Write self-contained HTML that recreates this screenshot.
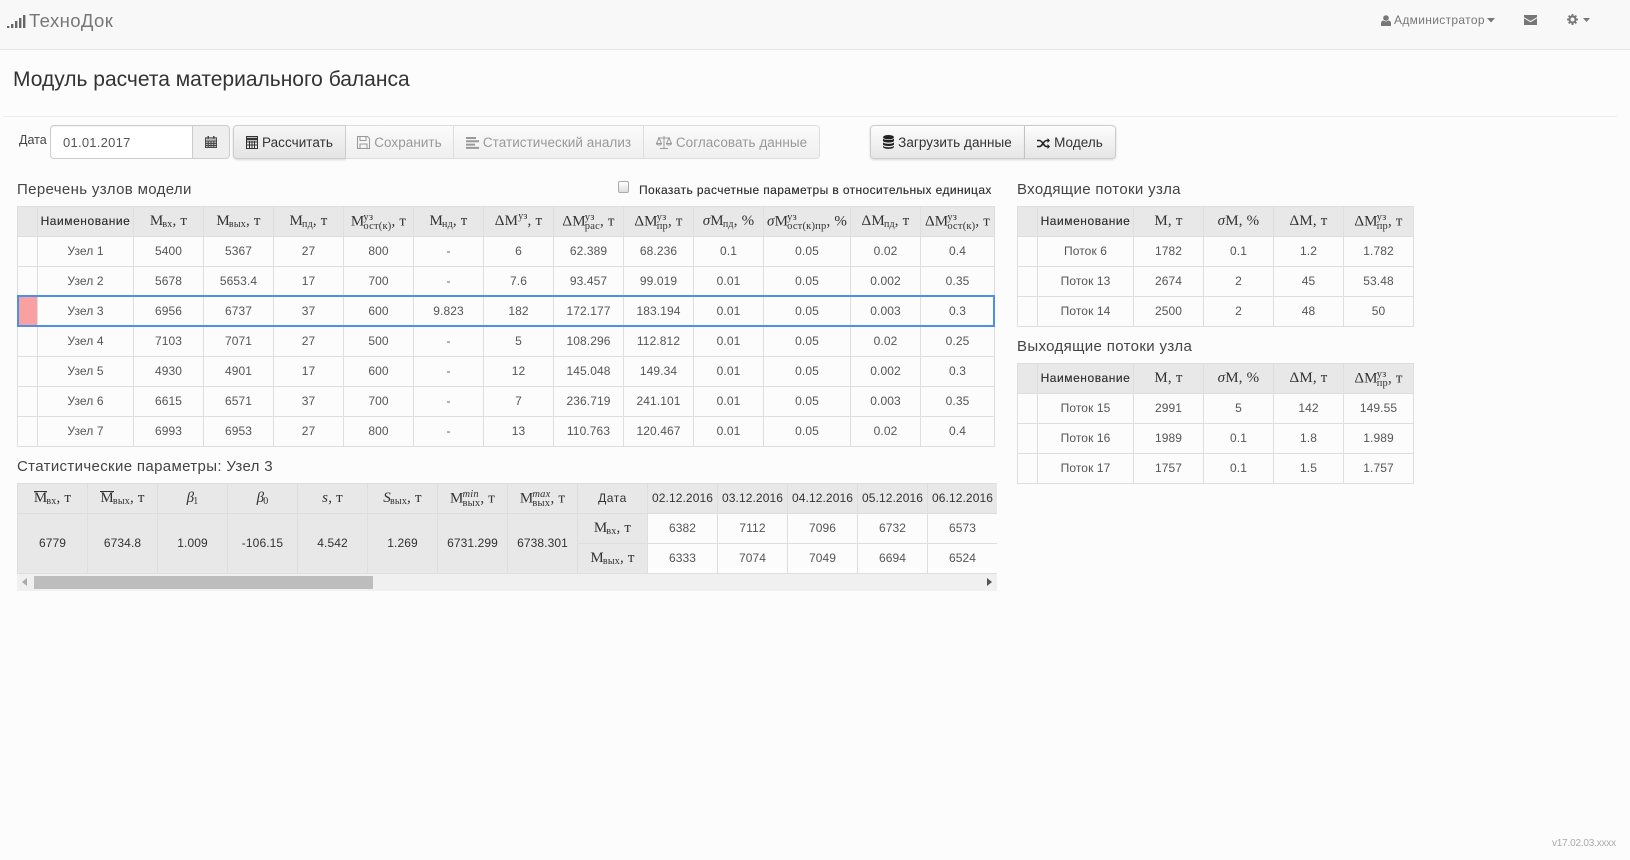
<!DOCTYPE html>
<html lang="ru"><head><meta charset="utf-8"><title>ТехноДок</title>
<style>
*{box-sizing:border-box}
html,body{margin:0;padding:0;width:1630px;height:860px;overflow:hidden;background:#fcfcfc;font-family:"Liberation Sans",sans-serif;color:#555;font-size:12px}
.a{position:absolute;white-space:nowrap}
.nav{left:0;top:0;width:1630px;height:50px;background:#f8f8f8;border-bottom:1px solid #e7e7e7}
.hr{left:3px;top:116px;width:1614px;height:1px;background:#eee}
h1{margin:0;font-weight:400;font-size:21px;color:#333;left:13px;top:68px;line-height:24px;letter-spacing:0}
.t{font-size:15px;color:#444;line-height:18px;letter-spacing:.35px}
.btn{top:125px;height:34px;border:1px solid #ccc;background:linear-gradient(#fdfdfd,#e6e6e6);font-size:13.5px;line-height:34px;color:#333;text-align:center;letter-spacing:.05px;border-left:0}
.btn svg{vertical-align:-2px;margin-right:4px}
.dis{color:#999;background:linear-gradient(#fbfbfb,#efefef);border-color:#ddd}
.dis svg{fill:#999}
table{position:absolute;border-collapse:separate;border-spacing:0;table-layout:fixed;border-top:1px solid #dedede;border-left:1px solid #dedede;background:#fcfcfc}
td,th{height:30px;padding:0 0 2px;border-right:1px solid #dedede;border-bottom:1px solid #dedede;text-align:center;font-weight:400;font-size:12px;color:#555;white-space:nowrap;overflow:hidden;letter-spacing:.1px}
th{background:#e8e8e8;color:#333}
.n{letter-spacing:.55px;text-shadow:0 0 .3px #333}
.g{background:#e8e8e8;color:#333}
th.m{font-family:"Liberation Serif",serif;font-size:15px;color:#333;letter-spacing:.2px;padding:0}
.m sub{font-size:10px;vertical-align:-2px;line-height:0;margin-left:-1px}
.m b{font-weight:400;font-style:italic}
.s{display:inline-block;vertical-align:middle;font-size:10.5px;line-height:9px;text-align:left;margin-left:-1px}
.s i{display:block;font-style:normal}
.s i.it{font-style:italic}
.o{border-top:1px solid #333;line-height:13px;display:inline-block}
</style></head><body>
<div class="a nav"></div>
<svg class="a" style="left:7px;top:15px" width="19" height="13" fill="#666"><rect x="0" y="11" width="2.4" height="2"/><rect x="4" y="9" width="2.4" height="4"/><rect x="8" y="6" width="2.4" height="7"/><rect x="12" y="3" width="2.4" height="10"/><rect x="16" y="0" width="2.4" height="13"/></svg>
<div class="a" style="left:29px;top:10px;font-size:18.5px;line-height:22px;color:#777;letter-spacing:.4px">ТехноДок</div>
<svg class="a" style="left:1381px;top:15px" width="10" height="11" viewBox="0 0 10 11" fill="#777"><circle cx="5" cy="3" r="2.8"/><path d="M0 11V8.2C0 6.6 1.2 5.6 2.6 5.5 3.3 6.1 4.1 6.4 5 6.4s1.7-.3 2.4-.9C8.800 5.600 10 6.600 10 8.200V11z"/></svg>
<div class="a" style="left:1394px;top:12px;font-size:12px;line-height:16px;color:#777;letter-spacing:.33px">Администратор</div>
<svg class="a" style="left:1487px;top:18px" width="8" height="5" fill="#777"><path d="M0 0h8L4 4.500z"/></svg>
<svg class="a" style="left:1524px;top:15px" width="13" height="10" viewBox="0 0 13 10" fill="#777"><path d="M0 0h13v2.200L6.500 6 0 2.200z"/><path d="M0 3.400V10h13V3.400L6.500 7.200z"/></svg>
<svg class="a" style="left:1567px;top:14px" width="11" height="11" viewBox="0 0 12 12"><circle cx="6" cy="6" r="3.300" fill="none" stroke="#777" stroke-width="2.300"/><path d="M6 0v12M0 6h12M1.800 1.800l8.400 8.400M10.200 1.800l-8.400 8.400" stroke="#777" stroke-width="2" stroke-dasharray="2 8 2"/></svg>
<svg class="a" style="left:1583px;top:18px" width="7" height="5" fill="#777"><path d="M0 0h7L3.500 4z"/></svg>

<h1 class="a">Модуль расчета материального баланса</h1>
<div class="a hr"></div>

<div class="a" style="left:19px;top:132px;font-size:12.5px;line-height:16px;color:#444">Дата</div>
<div class="a" style="left:50px;top:125px;width:143px;height:34px;border:1px solid #ccc;border-radius:4px 0 0 4px;background:#fff;font-size:13px;line-height:34px;padding-left:12px;color:#555;letter-spacing:.25px;box-shadow:inset 0 1px 1px rgba(0,0,0,.06)">01.01.2017</div>
<div class="a" style="left:192px;top:125px;width:38px;height:34px;border:1px solid #ccc;border-radius:0 4px 4px 0;background:#eee;text-align:center;padding-top:10px"><svg width="12" height="12" viewBox="0 0 13 13" fill="none" stroke="#444"><rect x=".5" y="2" width="12" height="10.500" fill="#bbb"/><path d="M.5 5.500h12M.5 8h12M.5 10.300h12M3.500 5v8M6.500 5v8M9.500 5v8"/><path d="M3.500 0v3M9.500 0v3" stroke-width="1.600"/></svg></div>

<div class="a btn" style="left:233px;width:113px;border-left:1px solid #ccc;border-radius:4px 0 0 4px;box-shadow:0 1px 2px rgba(0,0,0,.15);background:linear-gradient(#f6f6f6,#e4e4e4)"><svg width="12" height="13" viewBox="0 0 12 13" fill="none" stroke="#333"><rect x=".5" y=".5" width="11" height="12"/><path d="M1 3h10" stroke-width="2.500"/><path d="M.5 6h11M.5 9h11M3.500 5v8M6 5v8M8.500 5v8"/></svg>Рассчитать</div>
<div class="a btn dis" style="left:346px;width:108px"><svg width="13" height="13" viewBox="0 0 13 13" fill="none" stroke="#999" style="fill:none"><path d="M.5.500h10l2 2v10H.5z"/><path d="M3 .5v4h6v-4M3 12.500V8h7v4.500"/></svg>Сохранить</div>
<div class="a btn dis" style="left:454px;width:190px"><svg width="13" height="12" viewBox="0 0 13 12"><path d="M0 0h10v2H0zM0 3.300h13v2H0zM0 6.600h9v2H0zM0 9.900h13v2H0z"/></svg>Статистический анализ</div>
<div class="a btn dis" style="left:644px;width:176px;border-radius:0 4px 4px 0"><svg width="16" height="13" viewBox="0 0 16 13" style="fill:none" fill="none" stroke="#999"><path d="M8 0v12M4 12.500h8M2 2h12M3 2 .5 7.500h5zM13 2l-2.500 5.500h5zM.5 7.500c.5 2 4.500 2 5 0M10.500 7.500c.5 2 4.500 2 5 0"/></svg>Согласовать данные</div>
<div class="a btn" style="left:870px;width:155px;border-left:1px solid #ccc;border-radius:4px 0 0 4px;box-shadow:0 1px 2px rgba(0,0,0,.15)"><svg width="11" height="14" viewBox="0 0 11 14" fill="#222"><ellipse cx="5.500" cy="2.200" rx="5.500" ry="2.200"/><path d="M0 3.500C1 5.500 10 5.500 11 3.500V6C10 8 1 8 0 6zM0 7.300C1 9.300 10 9.300 11 7.300V9.500C10 11.500 1 11.500 0 9.500zM0 10.800C1 12.800 10 12.800 11 10.800V12C10 14.500 1 14.500 0 12z"/></svg>Загрузить данные</div>
<div class="a btn" style="left:1025px;width:91px;border-radius:0 4px 4px 0;box-shadow:0 1px 2px rgba(0,0,0,.15)"><svg width="13" height="11" viewBox="0 0 13 11" fill="none" stroke="#222" stroke-width="1.600"><path d="M0 2.500h2.500c3 0 4 6 7 6H11M0 8.500h2.500c3 0 4-6 7-6H11"/><path d="M10.500 0 13 2.500l-2.500 2.500zM10.500 6 13 8.500 10.500 11z" fill="#222" stroke="none"/></svg>Модель</div>

<div class="a t" style="left:17px;top:181px">Перечень узлов модели</div>
<div class="a" style="left:618px;top:181px;width:11px;height:12px;border:1px solid #aaa;border-radius:2px;background:linear-gradient(#fff,#ddd)"></div>
<div class="a" style="left:639px;top:182px;font-size:12px;line-height:16px;color:#333;letter-spacing:.39px;text-shadow:0 0 .3px #333">Показать расчетные параметры в относительных единицах</div>
<div class="a t" style="left:1017px;top:181px">Входящие потоки узла</div>
<div class="a t" style="left:1017px;top:338px">Выходящие потоки узла</div>
<div class="a t" style="left:17px;top:458px">Статистические параметры: Узел 3</div>

<table style="left:17px;top:206px;width:978px">
<colgroup><col style="width:20px"><col style="width:96px"><col style="width:70px"><col style="width:70px"><col style="width:70px"><col style="width:70px"><col style="width:70px"><col style="width:70px"><col style="width:70px"><col style="width:70px"><col style="width:70px"><col style="width:87px"><col style="width:70px"><col style="width:74px"></colgroup>
<tr><th></th><th class="n">Наименование</th>
<th class="m">M<sub>вх</sub>, т</th><th class="m">M<sub>вых</sub>, т</th><th class="m">M<sub>пд</sub>, т</th>
<th class="m">M<span class="s"><i>уз</i><i>ост(к)</i></span>, т</th>
<th class="m">M<sub>нд</sub>, т</th><th class="m">ΔM<sup style="font-size:10px;line-height:0">уз</sup>, т</th>
<th class="m">ΔM<span class="s"><i>уз</i><i>рас</i></span>, т</th>
<th class="m">ΔM<span class="s"><i>уз</i><i>пр</i></span>, т</th>
<th class="m"><b>σ</b>M<sub>пд</sub>, %</th>
<th class="m"><b>σ</b>M<span class="s"><i>уз</i><i>ост(к)пр</i></span>, %</th>
<th class="m">ΔM<sub>пд</sub>, т</th>
<th class="m">ΔM<span class="s"><i>уз</i><i>ост(к)</i></span>, т</th></tr>
<tr><td></td><td>Узел 1</td><td>5400</td><td>5367</td><td>27</td><td>800</td><td>-</td><td>6</td><td>62.389</td><td>68.236</td><td>0.1</td><td>0.05</td><td>0.02</td><td>0.4</td></tr>
<tr><td></td><td>Узел 2</td><td>5678</td><td>5653.4</td><td>17</td><td>700</td><td>-</td><td>7.6</td><td>93.457</td><td>99.019</td><td>0.01</td><td>0.05</td><td>0.002</td><td>0.35</td></tr>
<tr><td style="background:#f9a0a0"></td><td>Узел 3</td><td>6956</td><td>6737</td><td>37</td><td>600</td><td>9.823</td><td>182</td><td>172.177</td><td>183.194</td><td>0.01</td><td>0.05</td><td>0.003</td><td>0.3</td></tr>
<tr><td></td><td>Узел 4</td><td>7103</td><td>7071</td><td>27</td><td>500</td><td>-</td><td>5</td><td>108.296</td><td>112.812</td><td>0.01</td><td>0.05</td><td>0.02</td><td>0.25</td></tr>
<tr><td></td><td>Узел 5</td><td>4930</td><td>4901</td><td>17</td><td>600</td><td>-</td><td>12</td><td>145.048</td><td>149.34</td><td>0.01</td><td>0.05</td><td>0.002</td><td>0.3</td></tr>
<tr><td></td><td>Узел 6</td><td>6615</td><td>6571</td><td>37</td><td>700</td><td>-</td><td>7</td><td>236.719</td><td>241.101</td><td>0.01</td><td>0.05</td><td>0.003</td><td>0.35</td></tr>
<tr><td></td><td>Узел 7</td><td>6993</td><td>6953</td><td>27</td><td>800</td><td>-</td><td>13</td><td>110.763</td><td>120.467</td><td>0.01</td><td>0.05</td><td>0.02</td><td>0.4</td></tr>
</table>
<div class="a" style="left:17px;top:295px;width:978px;height:32px;border:2px solid #4d8eef"></div>

<table style="left:1017px;top:206px;width:397px">
<colgroup><col style="width:20px"><col style="width:96px"><col style="width:70px"><col style="width:70px"><col style="width:70px"><col style="width:70px"></colgroup>
<tr><th></th><th class="n">Наименование</th><th class="m">M, т</th><th class="m"><b>σ</b>M, %</th><th class="m">ΔM, т</th><th class="m">ΔM<span class="s"><i>уз</i><i>пр</i></span>, т</th></tr>
<tr><td></td><td>Поток 6</td><td>1782</td><td>0.1</td><td>1.2</td><td>1.782</td></tr>
<tr><td></td><td>Поток 13</td><td>2674</td><td>2</td><td>45</td><td>53.48</td></tr>
<tr><td></td><td>Поток 14</td><td>2500</td><td>2</td><td>48</td><td>50</td></tr>
</table>
<table style="left:1017px;top:363px;width:397px">
<colgroup><col style="width:20px"><col style="width:96px"><col style="width:70px"><col style="width:70px"><col style="width:70px"><col style="width:70px"></colgroup>
<tr><th></th><th class="n">Наименование</th><th class="m">M, т</th><th class="m"><b>σ</b>M, %</th><th class="m">ΔM, т</th><th class="m">ΔM<span class="s"><i>уз</i><i>пр</i></span>, т</th></tr>
<tr><td></td><td>Поток 15</td><td>2991</td><td>5</td><td>142</td><td>149.55</td></tr>
<tr><td></td><td>Поток 16</td><td>1989</td><td>0.1</td><td>1.8</td><td>1.989</td></tr>
<tr><td></td><td>Поток 17</td><td>1757</td><td>0.1</td><td>1.5</td><td>1.757</td></tr>
</table>

<div class="a" style="left:17px;top:483px;width:980px;height:108px;overflow:hidden;background:#f0f0f0">
<table style="left:0;top:0;width:981px">
<colgroup><col style="width:70px"><col style="width:70px"><col style="width:70px"><col style="width:70px"><col style="width:70px"><col style="width:70px"><col style="width:70px"><col style="width:70px"><col style="width:70px"><col style="width:70px"><col style="width:70px"><col style="width:70px"><col style="width:70px"><col style="width:70px"></colgroup>
<tr><th class="m"><span class="o">M</span><sub>вх</sub>, т</th><th class="m"><span class="o">M</span><sub>вых</sub>, т</th><th class="m"><b>β</b><sub>1</sub></th><th class="m"><b>β</b><sub>0</sub></th><th class="m"><b>s</b>, т</th><th class="m"><b>S</b><sub>вых</sub>, т</th><th class="m">M<span class="s"><i class="it">min</i><i>вых</i></span>, т</th><th class="m">M<span class="s"><i class="it">max</i><i>вых</i></span>, т</th><th class="n" style="text-shadow:none">Дата</th><th>02.12.2016</th><th>03.12.2016</th><th>04.12.2016</th><th>05.12.2016</th><th>06.12.2016</th></tr>
<tr><td rowspan="2" class="g">6779</td><td rowspan="2" class="g">6734.8</td><td rowspan="2" class="g">1.009</td><td rowspan="2" class="g">-106.15</td><td rowspan="2" class="g">4.542</td><td rowspan="2" class="g">1.269</td><td rowspan="2" class="g">6731.299</td><td rowspan="2" class="g">6738.301</td><th class="m">M<sub>вх</sub>, т</th><td>6382</td><td>7112</td><td>7096</td><td>6732</td><td>6573</td></tr>
<tr><th class="m">M<sub>вых</sub>, т</th><td>6333</td><td>7074</td><td>7049</td><td>6694</td><td>6524</td></tr>
</table>
<div class="a" style="left:17px;top:93px;width:339px;height:13px;background:#bdbdbd"></div>
<svg class="a" style="left:5px;top:95px" width="6" height="8" fill="#aaa"><path d="M5 0v8L0 4z"/></svg>
<svg class="a" style="left:970px;top:95px" width="6" height="8" fill="#555"><path d="M0 0v8l5-4z"/></svg>
</div>

<div class="a" style="left:1552px;top:838px;font-size:10px;line-height:12px;color:#aaa;letter-spacing:-.2px">v17.02.03.xxxx</div>
</body></html>
